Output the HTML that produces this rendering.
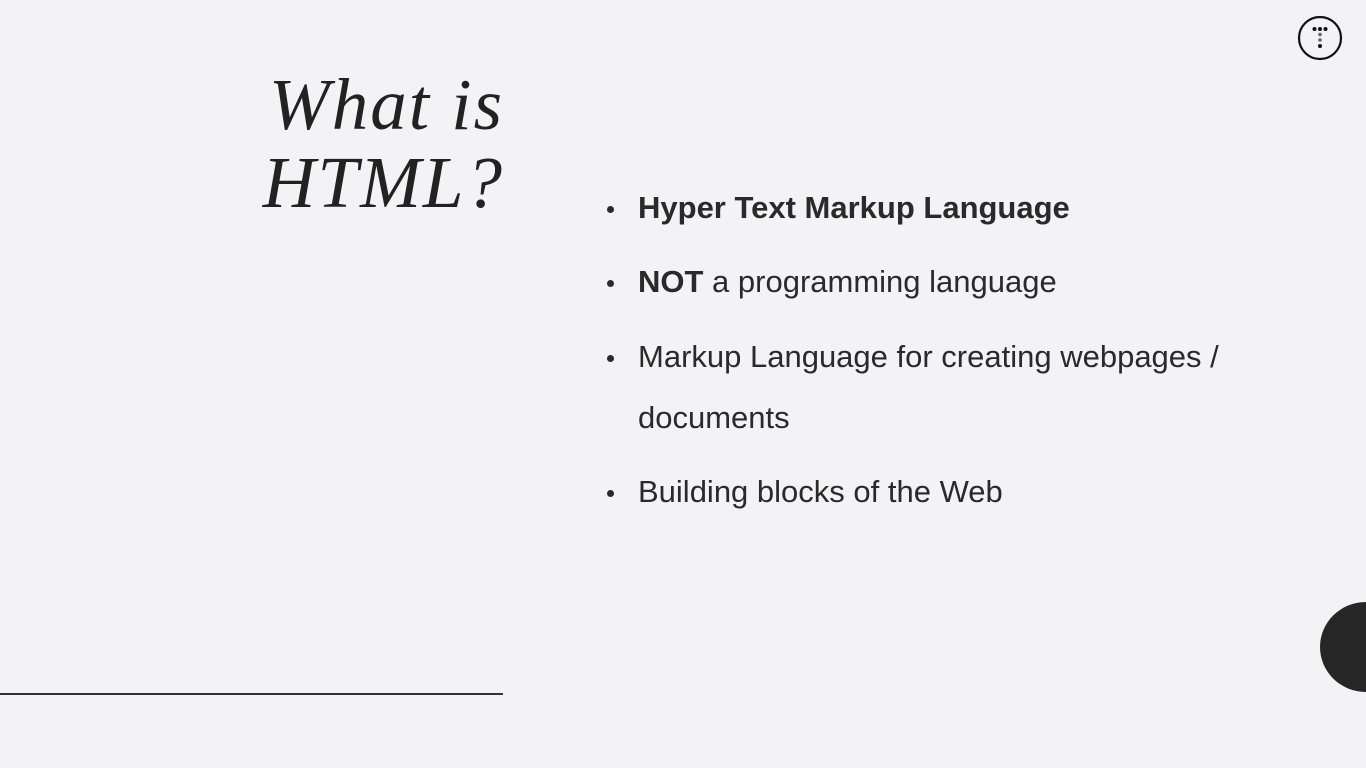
<!DOCTYPE html>
<html><head><meta charset="utf-8"><style>
body{margin:0;width:1366px;height:768px;background:#f3f3f5;position:relative;overflow:hidden;font-family:"Liberation Sans",sans-serif;color:#262626}
.t{position:absolute;right:862px;font-family:"Liberation Serif",serif;font-style:italic;font-size:73px;letter-spacing:2px;line-height:78px;text-align:right;top:66px;color:#222}
.b{position:absolute;left:638px;font-size:31px;white-space:nowrap;color:#2a2a2a}
.d:before{content:"";position:absolute;left:-31px;top:16px;width:7px;height:7px;border-radius:50%;background:#2a2a2a}
.line{position:absolute;left:0;top:693px;width:503px;height:2px;background:#333}
.c{position:absolute;left:1320px;top:602px;width:92px;height:90px;border-radius:50%;background:#262626}
</style></head><body>
<div class="t">What is<br>HTML?</div>
<div class="b d" style="top:190px"><b>Hyper Text Markup Language</b></div>
<div class="b d" style="top:264px"><b>NOT</b> a programming language</div>
<div class="b d" style="top:339px">Markup Language for creating webpages /</div>
<div class="b" style="top:400px">documents</div>
<div class="b d" style="top:474px">Building blocks of the Web</div>
<div class="line"></div>
<div class="c"></div>
<svg style="position:absolute;left:1297px;top:15px" width="46" height="46" viewBox="0 0 46 46">
<circle cx="23" cy="23" r="21" fill="none" stroke="#111" stroke-width="2.2"/>
<g fill="#111"><circle cx="17.5" cy="14" r="2"/><circle cx="23" cy="14" r="2"/><circle cx="28.5" cy="14" r="2"/><circle cx="23" cy="19.5" r="1.8" fill="#666"/><circle cx="23" cy="25" r="1.8" fill="#666"/><circle cx="23" cy="31" r="2"/></g>
</svg>
</body></html>
